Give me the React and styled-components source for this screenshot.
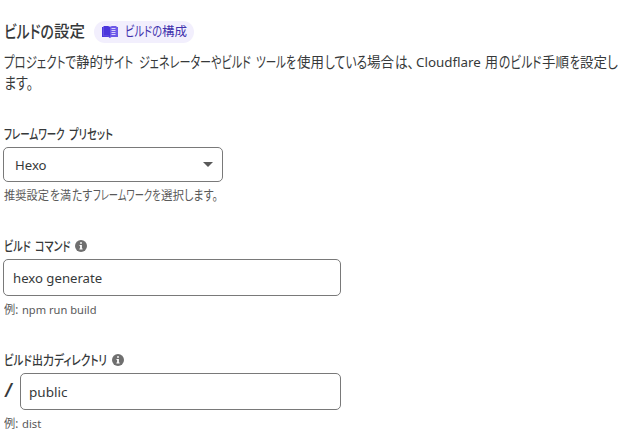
import React, { useLayoutEffect, useRef } from 'react';
import styled, { createGlobalStyle } from 'styled-components';

const GlobalStyle = createGlobalStyle`
  * { box-sizing: border-box; }
  body {
    margin: 0;
    background: #fff;
    color: #36393a;
    font-family: "Noto Sans", "Noto Sans CJK JP", sans-serif;
    overflow: hidden;
  }
`;

const Slot = styled.span`
  display: inline-block;
  flex: none;
  width: ${(p) => p.$width}px;
  margin-left: ${(p) => p.$gap || 0}px;
  white-space: nowrap;
`;

const Glyphs = styled.span`
  display: inline-block;
  transform-origin: left center;
  font-size: ${(p) => (p.$latin ? '0.94em' : '1em')};
  font-feature-settings: "palt";
`;

const KANA = /[\u3041-\u30ff]/;
const LATIN = /^[\x20-\x7e]+$/;

function Run({ w, gap, children }) {
  const ref = useRef(null);
  useLayoutEffect(() => {
    const fit = () => {
      if (!ref.current) return;
      const tall = KANA.test(children) ? 1.1 : 1;
      ref.current.style.transform = `scale(${w / ref.current.offsetWidth}, ${tall})`;
    };
    fit();
    document.fonts.ready.then(fit);
  }, [w, children]);
  return (
    <Slot $width={w} $gap={gap}>
      <Glyphs ref={ref} $latin={LATIN.test(children)}>{children}</Glyphs>
    </Slot>
  );
}

function Runs({ items }) {
  return items.map(([text, w, gap], i) => <Run key={i} w={w} gap={gap}>{text}</Run>);
}

const Page = styled.main`
  width: 629px;
  height: 443px;
  padding: 21px 0 0 4px;
`;

const Header = styled.header`
  display: flex;
  align-items: center;
  height: 22px;
`;

const Title = styled.h2`
  display: flex;
  width: 90px;
  height: 22px;
  margin: 0;
  font-size: 16px;
  line-height: 20px;
  font-weight: 500;
`;

const Badge = styled.a`
  display: flex;
  align-items: center;
  width: 100px;
  height: 22px;
  padding-left: 8px;
  border-radius: 11px;
  background: #f2effd;
  color: #4132ad;
  font-size: 12.5px;
  line-height: 22px;
`;

const BookIcon = styled.svg`
  flex: none;
  width: 16px;
  height: 12px;
  margin-right: 7px;
`;

const Line = styled.div`
  display: flex;
  height: 21px;
  font-size: 14px;
  line-height: 21px;
`;

const Description = styled.div`
  padding-top: 8px;
`;

const Field = styled.section`
  display: flex;
  flex-direction: column;
  margin-top: ${(p) => p.$top}px;
`;

const Label = styled.label`
  display: flex;
  align-items: center;
  height: 18px;
  margin-bottom: 3px;
  font-size: 12px;
  line-height: 18px;
  font-weight: 500;
`;

const InfoIcon = styled.svg`
  width: 12px;
  height: 12px;
  margin-left: 5px;
  margin-bottom: 2px;
`;

const Control = styled.div`
  display: flex;
  align-items: center;
  justify-content: space-between;
  width: ${(p) => p.$width}px;
  height: ${(p) => p.$height}px;
  margin-left: -1px;
  padding: 0 9px 0 ${(p) => p.$pad}px;
  border: 1px solid #797979;
  border-radius: 5px;
  font-size: 14px;
  line-height: 20px;
`;

const Caret = styled.svg`
  width: 10px;
  height: 5px;
`;

const Help = styled.div`
  display: flex;
  height: 18px;
  margin-top: 5px;
  color: #595959;
  font-size: 12px;
  line-height: 18px;
`;

const PathRow = styled.div`
  display: flex;
`;

const Slash = styled.span`
  display: flex;
  width: 17px;
  font-size: 21px;
  line-height: 32px;
  font-weight: 400;
`;

function Info() {
  return (
    <InfoIcon viewBox="0 0 12 12">
      <circle cx="6" cy="6" r="6" fill="#6f6f6f" />
      <path d="M5.1 2.2h1.8v1.6H5.1zM4.5 4.9h2.4v3.6h.7v1H4.4v-1h.7V5.9h-.6z" fill="#fff" />
    </InfoIcon>
  );
}

export default function App() {
  return (
    <Page>
      <GlobalStyle />
      <Header>
        <Title><Runs items={[['ビルドの', 50], ['設定', 31]]} /></Title>
        <Badge>
          <BookIcon viewBox="0 0 16 12">
            <path d="M0 1h1.5V0H6l2 .8V12l-1.500-1H0z" fill="#4a35dc" />
            <path d="M8 .8 10 0h4.500v1H16v10H9.500L8 12z" fill="#6d59e8" />
            <path d="M9.500 2.500H13.500M9.500 4.500H13.500M9.500 6.500H13.500M9.500 8.500H13.500" stroke="#e4defc" strokeWidth=".9" />
            <path d="M1.500 1v8.800H6L7.500 10.600" fill="none" stroke="#8c7cf0" strokeWidth=".4" />
          </BookIcon>
          <Runs items={[['ビルドの', 37], ['構成', 25]]} />
        </Badge>
      </Header>

      <Description>
        <Line>
          <Runs items={[
            ['プロジェクトで', 72], ['静的', 27], ['サイト', 30], ['ジェネレーターやビルド', 112, 6],
            ['ツールを', 40, 5], ['使用', 27, 1], ['している', 42, 1], ['場合', 27], ['は、', 19, 1],
            ['Cloudflare', 65, 2], ['用', 13, 4], ['のビルド', 43, 1], ['手順', 27],
            ['を', 10, 1], ['設定', 27], ['し', 11],
          ]} />
        </Line>
        <Line><Run w={29}>ます。</Run></Line>
      </Description>

      <Field $top={33}>
        <Label><Runs items={[['フレームワーク', 61], ['プリセット', 44, 4]]} /></Label>
        <Control $width={220} $height={35} $pad={11}>
          <Run w={32}>Hexo</Run>
          <Caret viewBox="0 0 10 5"><path d="M0 0h10L5 5z" fill="#595959" /></Caret>
        </Control>
        <Help>
          <Runs items={[
            ['推奨設定', 45], ['を', 10, 1], ['満', 11], ['たす', 20, 1],
            ['フレームワークを', 68, 1], ['選択', 23], ['します。', 34],
          ]} />
        </Help>
      </Field>

      <Field $top={33}>
        <Label><Runs items={[['ビルド', 27], ['コマンド', 35, 4]]} /><Info /></Label>
        <Control $width={338} $height={37} $pad={9}><Run w={89}>hexo generate</Run></Control>
        <Help><Runs items={[['例:', 14], ['npm run build', 75, 4]]} /></Help>
      </Field>

      <Field $top={33}>
        <Label><Runs items={[['ビルド', 28], ['出力', 22], ['ディレクトリ', 53]]} /><Info /></Label>
        <PathRow>
          <Slash><Run w={9}>/</Run></Slash>
          <Control $width={321} $height={37} $pad={8}><Run w={38}>public</Run></Control>
        </PathRow>
        <Help><Runs items={[['例:', 14], ['dist', 19, 4]]} /></Help>
      </Field>
    </Page>
  );
}
